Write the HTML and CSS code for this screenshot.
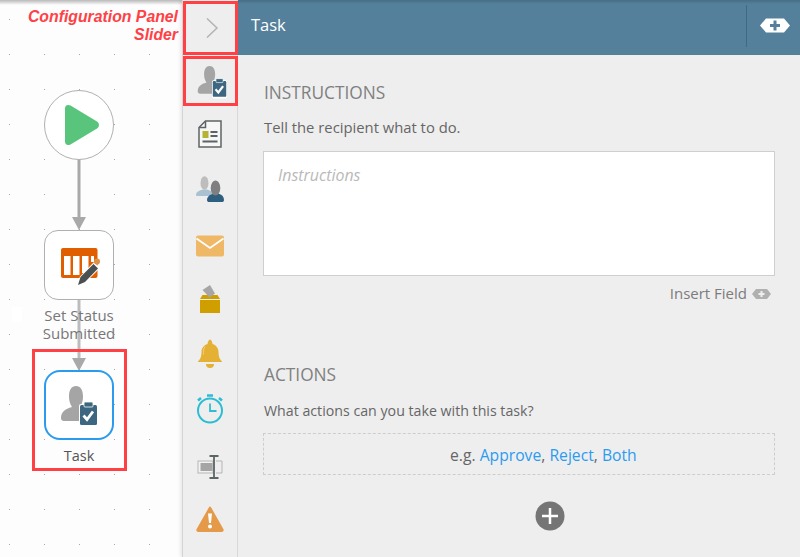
FILE: index.html
```html
<!DOCTYPE html>
<html lang="en">
<head>
<meta charset="utf-8">
<title>Task</title>
<link rel="stylesheet" href="styles.css">
</head>
<body>
<div class="app">
  <section class="canvas">
    <div class="annotation">Configuration Panel<br>Slider</div>

    <svg class="links" width="182" height="557" viewBox="0 0 182 557">
      <g fill="none" stroke-width="3">
        <path d="M79 159V218" stroke="#a9a9a9"/>
        <path d="M79 300V360" stroke="#bcbcbc"/>
      </g>
      <path d="M72 217h14l-7 13z" fill="#a9a9a9"/>
      <path d="M72 358h14l-7 13z" fill="#a9a9a9"/>
    </svg>

    <div class="node node-start">
      <svg width="40" height="42" viewBox="0 0 40 42"><path d="M5 4.500C5 1 8 .2 10.500 1.600L37 17.500c2.600 1.700 2.600 5.300 0 7L10.500 40.400C8 41.800 5 41 5 37.500z" fill="#58c47c"/></svg>
    </div>

    <div class="node node-status">
      <svg width="48" height="48" viewBox="0 0 48 48">
        <rect x="6" y="7" width="36.500" height="30" rx="2" fill="#e05d00"/>
        <g fill="#fff"><rect x="9" y="15" width="6.500" height="19"/><rect x="18" y="15" width="6.500" height="19"/><rect x="27" y="15" width="6.500" height="17"/><rect x="36" y="15" width="3" height="6"/></g>
        <path d="M22 45l3-9.500L39 21l6 6L31 41z" fill="#fff"/>
        <path d="M23 44l2.500-8L38.500 23l4.500 4.500L30 41z" fill="#4a4f52"/>
        <circle cx="42" cy="20.500" r="3" fill="#dd9245"/>
      </svg>
    </div>
    <div class="node-label label-status">Set Status<br>Submitted</div>

    <div class="node node-task">
      <svg width="48" height="48" viewBox="0 0 48 48">
        <path d="M6 37c0-6 4-9 11-11-2-3-3-6-3-10.500C14 9 16.500 5 21 5s7 4 7 10.500c0 4-1 8-3 10.500v14H9c-2 0-3-1-3-3z" fill="#a5a5a5"/>
        <rect x="24" y="23" width="19" height="23" rx="2" fill="#fff"/>
        <rect x="25" y="24" width="17" height="20" rx="1.500" fill="#3d6680"/>
        <rect x="29" y="21" width="9" height="5" rx="1" fill="#3d6680" stroke="#fff" stroke-width=".8"/>
        <path d="M28.500 34.500l3.500 4 6-8" fill="none" stroke="#fff" stroke-width="2.800"/>
      </svg>
    </div>
    <div class="node-label label-task">Task</div>

    <div class="speck"></div>
    <div class="mark mark-task"></div>
  </section>

  <nav class="rail">
    <div class="rail-item rail-toggle marked">
      <svg width="14" height="22" viewBox="0 0 14 22"><path d="M2 1.500l10 9.500-10 9.500" fill="none" stroke="#b3b3b3" stroke-width="1.500"/></svg>
    </div>
    <div class="rail-item rail-task marked">
      <svg width="38" height="38" viewBox="0 0 48 48">
        <path d="M6 37c0-6 4-9 11-11-2-3-3-6-3-10.500C14 9 16.500 5 21 5s7 4 7 10.500c0 4-1 8-3 10.500v14H9c-2 0-3-1-3-3z" fill="#a5a5a5"/>
        <rect x="24" y="23" width="19" height="23" rx="2" fill="#fff"/>
        <rect x="25" y="24" width="17" height="20" rx="1.500" fill="#3d6680"/>
        <rect x="29" y="21" width="9" height="5" rx="1" fill="#3d6680" stroke="#fff" stroke-width=".8"/>
        <path d="M28.500 34.500l3.500 4 6-8" fill="none" stroke="#fff" stroke-width="2.800"/>
      </svg>
    </div>
    <div class="rail-item rail-form">
      <svg width="24" height="28" viewBox="0 0 24 28">
        <path d="M7.500 1H23v26H1V7.500z" fill="#f7f7f7" stroke="#5d6466" stroke-width="1.500"/>
        <path d="M7.500 1v6.500H1" fill="none" stroke="#5d6466" stroke-width="1.500"/>
        <rect x="4.500" y="11" width="6" height="7" fill="#b5b334"/>
        <path d="M12.500 12h7M12.500 16h7M4.500 21.500h15" stroke="#5d6466" stroke-width="2"/>
      </svg>
    </div>
    <div class="rail-item rail-people">
      <svg width="30" height="28" viewBox="0 0 30 28">
        <path d="M1 20c0-3 3-4.500 7-5.500h4c3 .8 5 2 5.500 4V21H2.500C1.500 21 1 20.800 1 20z" fill="#a9c1d1"/>
        <ellipse cx="9.500" cy="8" rx="4" ry="6.800" fill="#bdbdbd"/>
        <path d="M12 25c0-3.500 3-5.500 7-6.500h4c4 1 6 3 6 6.500 0 1.500-1 2-2 2H14c-1 0-2-.5-2-2z" fill="#2f5f7f"/>
        <ellipse cx="20.500" cy="13" rx="4.800" ry="7.500" fill="#7f7f7f"/>
      </svg>
    </div>
    <div class="rail-item rail-mail">
      <svg width="30" height="22" viewBox="0 0 30 22">
        <rect x="1" y="0.500" width="28" height="21" rx="2" fill="#efb866"/>
        <path d="M1.500 3.500L15 13 28.500 3.500" fill="none" stroke="#fff" stroke-width="1.800"/>
      </svg>
    </div>
    <div class="rail-item rail-box">
      <svg width="22" height="30" viewBox="0 0 22 30">
        <rect x="1" y="16" width="20" height="13" fill="#cf9f00"/>
        <path d="M3.500 11H18.500L21 15H1z" fill="#cf9f00"/>
        <path d="M3.500 6L11 1l5 8.500-5.500 4z" fill="#a6a6a6"/>
      </svg>
    </div>
    <div class="rail-item rail-bell">
      <svg width="26" height="30" viewBox="0 0 26 30">
        <path d="M1 24c0-1 1-1.500 2-3 1-2 1.500-4.500 1.500-7 0-4 2.500-7 6-8 0-2 1.500-4.500 2.500-4.500s2.500 2.500 2.500 4.500c3.500 1 6 4 6 8 0 2.500.5 5 1.500 7 1 1.500 2 2 2 3z" fill="#e4b135"/>
        <path d="M8 8.500c-1.500 2-1.500 5-1.500 8" fill="none" stroke="#f3cf79"/>
        <path d="M9 26h8a4 4 0 0 1-8 0z" fill="#e4b135"/>
      </svg>
    </div>
    <div class="rail-item rail-timer">
      <svg width="28" height="30" viewBox="0 0 28 30">
        <circle cx="14" cy="16.500" r="12" fill="none" stroke="#2bbdd3" stroke-width="2"/>
        <path d="M14 9.500v7.500h6.500" fill="none" stroke="#2bbdd3" stroke-width="1.800"/>
        <path d="M11 1.500h6" stroke="#2bbdd3" stroke-width="2.500"/>
        <path d="M2 6.500l3-2.500M26 6.500l-3-2.500" stroke="#2bbdd3" stroke-width="2.500"/>
      </svg>
    </div>
    <div class="rail-item rail-variable">
      <svg width="26" height="24" viewBox="0 0 26 24">
        <rect x="1" y="6" width="15" height="12" fill="#f2f2f2" stroke="#b5b5b5"/>
        <path d="M19 6h6v12h-6" fill="none" stroke="#b5b5b5"/>
        <rect x="3.500" y="8" width="12" height="8" fill="#a5a5a5"/>
        <path d="M12.500 1h9M17 1v22M12.500 23h9" stroke="#5d6466" stroke-width="1.800" fill="none"/>
      </svg>
    </div>
    <div class="rail-item rail-warn">
      <svg width="28" height="28" viewBox="0 0 28 28">
        <path d="M14 2.500L26.500 24.500c.5 1-.2 1.500-1 1.500H2.500c-.8 0-1.500-.5-1-1.500z" fill="#e49a48" stroke="#e49a48" stroke-width="2" stroke-linejoin="round"/>
        <path d="M12 8.500h4l-1 9.500h-2z" fill="#fff"/>
        <circle cx="14" cy="21.500" r="2" fill="#fff"/>
      </svg>
    </div>
  </nav>

  <main class="panel">
    <header class="panel-head">
      <h1 class="panel-title">Task</h1>
      <div class="head-action">
        <svg width="30" height="15" viewBox="0 0 30 15"><path d="M6 0.500H24L30 7.500 24 14.500H6L0 7.500z" fill="#fff"/><path d="M15 2.500v10M10 7.500h10" stroke="#54809b" stroke-width="3"/></svg>
      </div>
    </header>
    <div class="panel-body">
      <h2 class="section-title">INSTRUCTIONS</h2>
      <p class="hint">Tell the recipient what to do.</p>
      <div class="textbox">Instructions</div>
      <div class="insert-field">
        <span>Insert Field</span>
        <svg width="19" height="10" viewBox="0 0 19 10"><path d="M4 0H15L19 5 15 10H4L0 5z" fill="#b0b0b0"/><path d="M9.500 2v6M6.500 5h6" stroke="#eee" stroke-width="2"/></svg>
      </div>
      <h2 class="section-title section-actions">ACTIONS</h2>
      <p class="hint hint-actions">What actions can you take with this task?</p>
      <div class="dropzone">e.g. <a class="link">Approve</a>, <a class="link">Reject</a>, <a class="link">Both</a></div>
      <div class="add-row">
        <svg width="30" height="30" viewBox="0 0 30 30"><circle cx="15" cy="15" r="14.500" fill="#757575"/><path d="M15 7v16M7 15h16" stroke="#fff" stroke-width="2.500"/></svg>
      </div>
    </div>
  </main>
</div>
</body>
</html>
```
FILE: styles.css
```css
* { box-sizing: border-box; }
html, body { margin: 0; padding: 0; }
body {
  width: 800px;
  height: 557px;
  overflow: hidden;
  font-family: "Open Sans", sans-serif;
  color: #666;
}
.app { display: flex; width: 800px; height: 557px; }

/* Canvas */
.canvas {
  position: relative;
  width: 182px;
  flex: none;
  background-color: #fdfdfd;
  background-image:
    linear-gradient(#b9b9b9, rgba(255,255,255,0) 5px),
    radial-gradient(circle at 9.500px 19.500px, #a8a8a8 0.6px, transparent 1px);
  background-size: 100% 8px, 35px 35px;
  background-repeat: no-repeat, repeat;
}
.annotation {
  position: absolute;
  top: 8px;
  right: 4px;
  text-align: right;
  font: italic bold 15.800px/18px "Liberation Sans", sans-serif;
  white-space: nowrap;
  color: #ff4146;
}
.links { position: absolute; left: 0; top: 0; }
.node {
  position: absolute;
  left: 44px;
  width: 70px;
  height: 70px;
  background: #fff;
  border: 1px solid #b0b0b0;
  display: flex;
  align-items: center;
  justify-content: center;
}
.node-start { top: 90px; border-radius: 50%; padding-left: 2px; }
.node-status { top: 230px; border-radius: 14px; }
.node-task { top: 370px; border-radius: 16px; border: 2px solid #2b9bf0; }
.node-label {
  position: absolute;
  left: 24px;
  width: 110px;
  text-align: center;
  font-size: 15px;
  line-height: 18px;
  color: #777;
}
.label-status { top: 306px; }
.label-task { top: 447px; color: #555; font-size: 14.500px; }
.speck { position: absolute; left: 12px; top: 307px; width: 10px; height: 15px; background: #fff; }
.mark { position: absolute; border: 3px solid #ff4146; }
.mark-task { left: 32px; top: 349px; width: 95px; height: 122px; }

/* Rail */
.rail {
  width: 56px;
  flex: none;
  background: #eee;
  border-left: 1px solid #d4d4d4;
  border-right: 1px solid #d8d8d8;
  box-shadow: -2px 0 3px rgba(0,0,0,0.08);
  display: flex;
  flex-direction: column;
  position: relative;
  z-index: 1;
}
.rail-item { display: flex; align-items: center; justify-content: center; flex: none; position: relative; }
.marked { border: 3px solid #ff4146; margin-right: -1px; }
.rail-toggle { height: 54px; margin-top: 1px; padding: 0 0 1px 3px; }
.rail-task { height: 50px; margin-top: 1px; padding-left: 2px; }
.rail-form { height: 55px; }
.rail-people { height: 56px; }
.rail-mail { height: 56px; padding-top: 1px; }
.rail-box { height: 52px; }
.rail-bell { height: 56px; }
.rail-timer { height: 56px; }
.rail-variable { height: 58px; padding-top: 2px; }
.rail-warn { height: 48px; }

/* Panel */
.panel { flex: 1; display: flex; flex-direction: column; background: #eee; min-width: 0; }
.panel-head {
  height: 55px;
  flex: none;
  background: linear-gradient(#466d85, #54809b 4px);
  display: flex;
  align-items: center;
  justify-content: space-between;
  padding-left: 13px;
}
.panel-title { margin: 0 0 7px; font-size: 16.500px; font-weight: 400; color: #fff; }
.head-action {
  width: 54px;
  height: 42px;
  margin-bottom: 4px;
  border-left: 1px solid #3f6a85;
  display: flex;
  align-items: center;
  justify-content: center;
  padding-left: 3px;
}
.panel-body { padding: 0 25px 0 25px; flex: 1; display: flex; flex-direction: column; }
.section-title { margin: 26px 0 0 1px; font-size: 17.300px; line-height: 23px; font-weight: 400; color: #808080; }
.hint { margin: 14px 0 0 1px; font-size: 14.800px; line-height: 19px; color: #666; }
.textbox {
  margin-top: 14px;
  height: 125px;
  background: #fff;
  border: 1px solid #cfcfcf;
  padding: 14px 14px;
  font-size: 15.900px;
  line-height: 19px;
  font-style: italic;
  color: #b9b9b9;
}
.insert-field {
  margin-top: 8px;
  display: flex;
  justify-content: flex-end;
  align-items: center;
  gap: 5px;
  padding-right: 4px;
  font-size: 15px;
  line-height: 19px;
  color: #7c7c7c;
}
.section-actions { margin-top: 60px; }
.hint-actions { margin-top: 15px; font-size: 14.200px; }
.dropzone {
  margin-top: 13px;
  height: 42px;
  border: 1px dashed #cdcdcd;
  padding: 12px 0 0 186px;
  font-size: 15.700px;
  line-height: 19px;
  color: #666;
}
.link { color: #2b9bf0; }
.add-row { margin-top: 26px; padding-left: 272px; line-height: 0; }
```
